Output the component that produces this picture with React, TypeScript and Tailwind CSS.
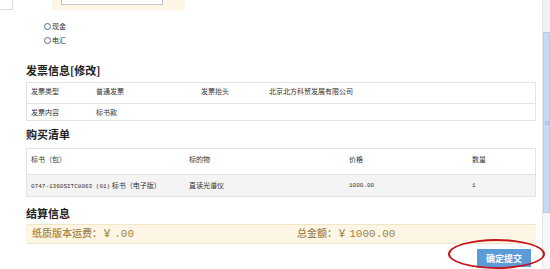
import React from "react";

const cjk = { fontFamily: '"Noto Sans CJK SC", "Liberation Sans", sans-serif' };
const mono = { fontFamily: '"Liberation Mono", monospace' };

export default function App() {
  return (
    <div className="relative flex h-[269px] w-[550px] overflow-hidden bg-white text-[#333]" style={cjk}>
      <div className="flex w-[542px] flex-col">
        {/* top partial boxes */}
        <div className="flex h-[10px]">
          <div className="h-[10px] w-[13px] border-b border-r border-[#dcdcdc]" />
          <div className="ml-[39px] h-[10px] w-[133px] bg-[#fdf6e6] pl-[9px]">
            <div className="h-[5px] w-[102px] border-x border-b border-[#c8c8c8] bg-white" />
          </div>
        </div>

        {/* radios */}
        <div className="mt-[9px] flex flex-col pl-[44px] text-[7px] leading-none">
          {["现金", "电汇"].map((t) => (
            <div key={t} className="flex h-[14px] items-center">
              <span className="mr-[1px] inline-block h-[7px] w-[7px] rounded-full border border-[#4a6c9c] bg-white" />
              <span>{t}</span>
            </div>
          ))}
        </div>

        {/* heading 1 */}
        <div className="mt-[16px] flex h-[14px] items-center pl-[26px] text-[11px] font-semibold leading-none text-[#222]">
          发票信息[修改]
        </div>

        {/* table 1 */}
        <div className="ml-[26px] mt-[5px] w-[510px] border border-[#e3e3e3] text-[7px] leading-none">
          <div className="flex h-[21px] items-center border-b border-[#e3e3e3] pb-[3px] pl-[4px]">
            <div className="w-[65px]">发票类型</div>
            <div className="w-[105px]">普通发票</div>
            <div className="w-[68px]">发票抬头</div>
            <div>北京北方科贸发展有限公司</div>
          </div>
          <div className="flex h-[16px] items-center pl-[4px]">
            <div className="w-[65px]">发票内容</div>
            <div>标书款</div>
          </div>
        </div>

        {/* heading 2 */}
        <div className="mt-[6px] flex h-[14px] items-center pl-[26px] text-[11px] font-semibold leading-none text-[#222]">
          购买清单
        </div>

        {/* table 2 */}
        <div className="ml-[26px] mt-[7px] w-[510px] border border-[#e3e3e3] text-[7px] leading-none">
          <div className="flex h-[26px] items-center border-b border-[#e3e3e3] pb-[4px] pl-[4px]">
            <div className="w-[158px]">标书（包）</div>
            <div className="w-[160px]">标的物</div>
            <div className="w-[123px]">价格</div>
            <div>数量</div>
          </div>
          <div className="flex h-[21px] items-center bg-[#f4f4f4] pl-[4px]">
            <div className="w-[158px] whitespace-nowrap">
              <span className="text-[6px]" style={mono}>
                0747-1360SITC8063 (01)
              </span>{" "}
              标书（电子版）
            </div>
            <div className="w-[160px]">直读光谱仪</div>
            <div className="w-[123px] text-[6px]" style={mono}>
              1000.00
            </div>
            <div className="text-[6px]" style={mono}>1</div>
          </div>
        </div>

        {/* heading 3 */}
        <div className="mt-[9px] flex h-[14px] items-center pl-[26px] text-[11px] font-semibold leading-none text-[#222]">
          结算信息
        </div>

        {/* totals bar */}
        <div className="ml-[26px] mt-[4px] flex h-[20px] w-[510px] items-center border-y border-[#f1e6c8] bg-[#fdf6e4] text-[10px] font-medium leading-none text-[#a3844a]">
          <div className="w-[271px] pl-[6px]">
            纸质版本运费：￥ <span className="text-[11px]" style={mono}>.00</span>
          </div>
          <div>
            总金额：￥ <span className="text-[11px]" style={mono}>1000.00</span>
          </div>
        </div>

        {/* submit */}
        <div className="ml-[26px] mt-[5px] flex w-[510px] justify-end pr-[5px]">
          <button className="flex h-[18px] w-[54px] items-center justify-center bg-[#5b9bd8] text-[9px] font-bold leading-none text-white">
            确定提交
          </button>
        </div>
      </div>

      {/* scrollbar */}
      <div className="flex w-[8px] flex-col border-l border-[#e8e8e8] bg-[#f7f7f7]">
        <div className="h-[32px] bg-[#f2f2f2]" />
        <div className="flex h-[181px] items-center justify-center border border-[#b9cbec] bg-[#c9d8f4]">
          <div className="h-[4px] w-[4px] border border-[#a9bde3]" />
        </div>
        <div className="flex-1 bg-[#f7f7f7]" />
      </div>

      {/* red annotation ellipse */}
      <div className="absolute left-[448px] top-[239px] h-[30px] w-[97px] rounded-[50%] border-2 border-[#c4161c]" />
    </div>
  );
}
